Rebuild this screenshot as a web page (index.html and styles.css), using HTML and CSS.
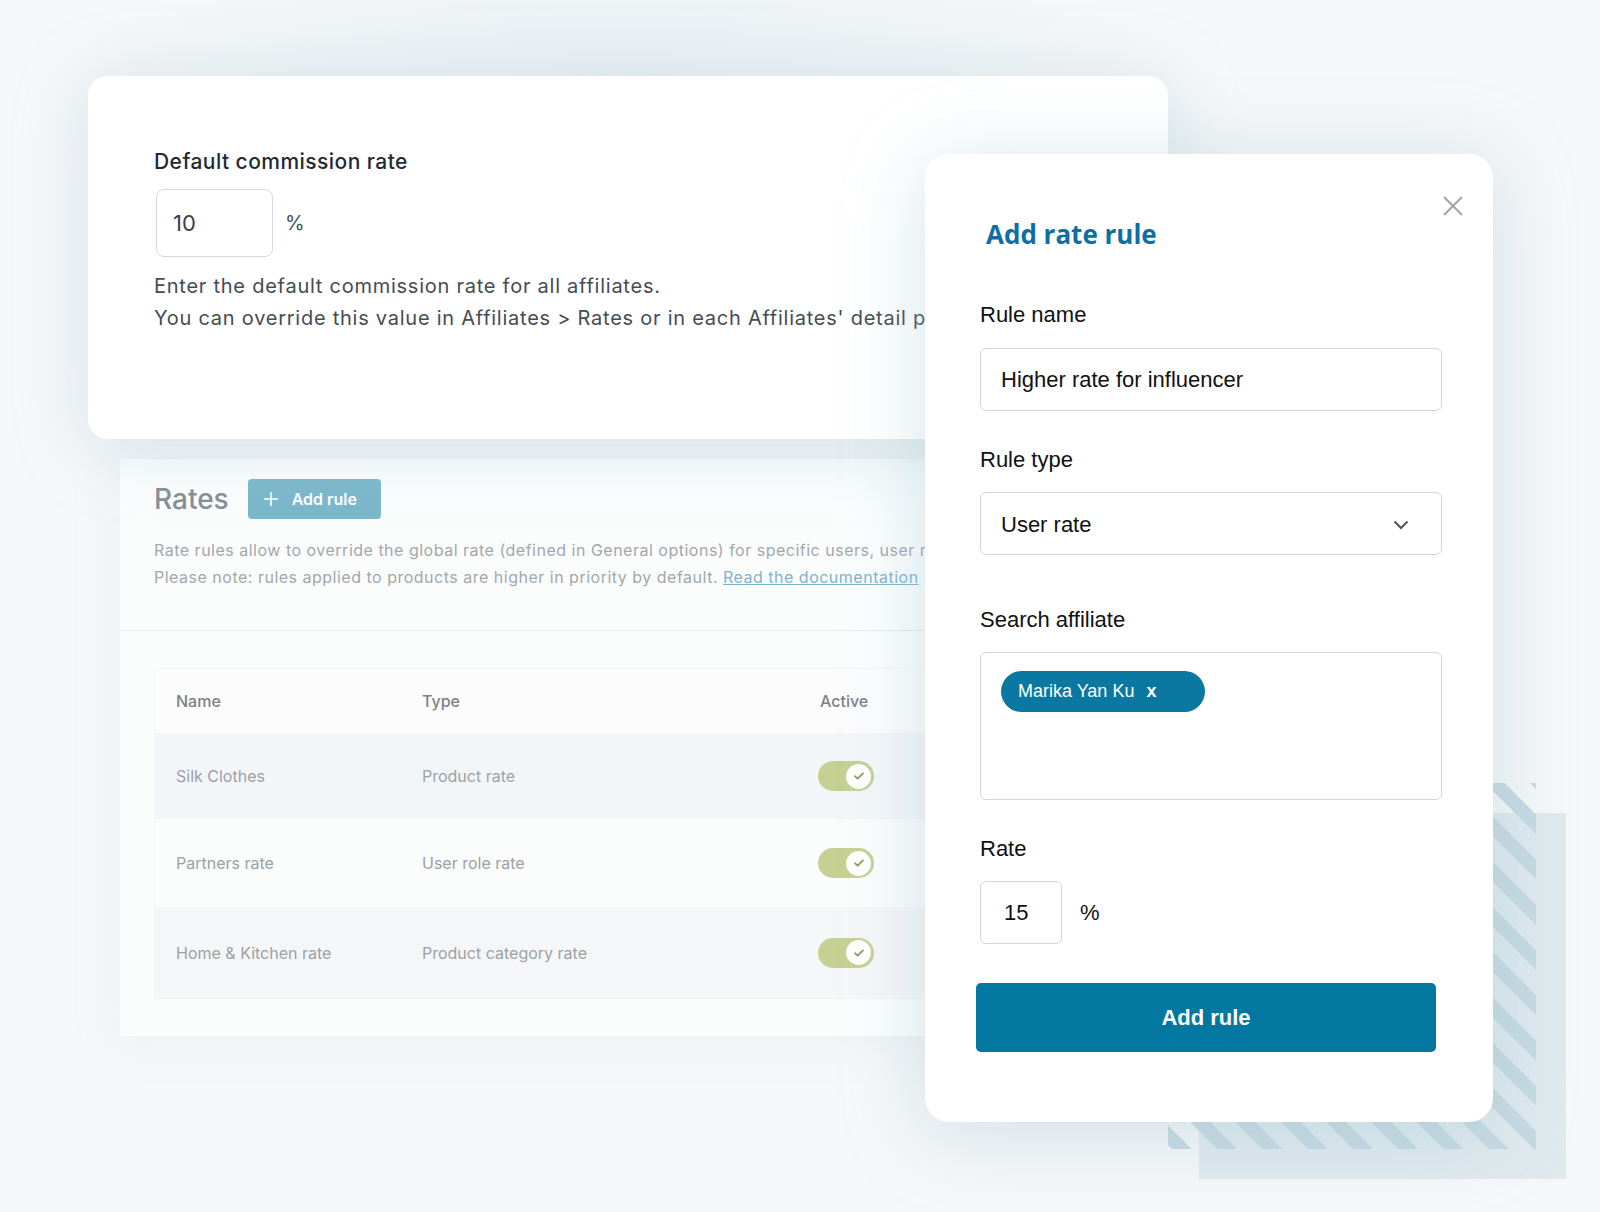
FILE: index.html
```html
<!DOCTYPE html>
<html lang="en">
<head>
<meta charset="utf-8">
<title>Rates</title>
<link rel="stylesheet" href="styles.css">
</head>
<body>
<div class="stage">
  <section class="card-default">
    <div class="dc-label">Default commission rate</div>
    <div class="dc-row">
      <div class="dc-input">10</div>
      <span class="dc-unit">%</span>
    </div>
    <p class="dc-help">Enter the default commission rate for all affiliates.<br>You can override this value in Affiliates &gt; Rates or in each Affiliates' detail page.</p>
  </section>

  <section class="rates">
    <div class="rates-head">
      <div class="rates-title-row">
        <h2 class="rates-title">Rates</h2>
        <span class="btn-small"><svg class="plus" width="14" height="14" viewBox="0 0 14 14"><path d="M7 0v14M0 7h14" stroke="#fff" stroke-width="1.6" fill="none"/></svg>Add rule</span>
      </div>
      <p class="rates-desc">Rate rules allow to override the global rate (defined in General options) for specific users, user roles, products or product categories.<br>Please note: rules applied to products are higher in priority by default. <a class="doc-link">Read the documentation</a></p>
    </div>
    <div class="table-wrap">
      <div class="table">
        <div class="tr th"><span class="c1">Name</span><span class="c2">Type</span><span class="c3">Active</span></div>
        <div class="tr r1"><span class="c1">Silk Clothes</span><span class="c2">Product rate</span><span class="c3"><span class="toggle"><span class="knob"><svg width="12" height="10" viewBox="0 0 12 10"><path d="M2 5.2l2.6 2.4L10 2.4" stroke="#8f9866" stroke-width="1.8" fill="none" stroke-linecap="round" stroke-linejoin="round"/></svg></span></span></span></div>
        <div class="tr r2"><span class="c1">Partners rate</span><span class="c2">User role rate</span><span class="c3"><span class="toggle"><span class="knob"><svg width="12" height="10" viewBox="0 0 12 10"><path d="M2 5.2l2.6 2.4L10 2.4" stroke="#8f9866" stroke-width="1.8" fill="none" stroke-linecap="round" stroke-linejoin="round"/></svg></span></span></span></div>
        <div class="tr r3"><span class="c1">Home &amp; Kitchen rate</span><span class="c2">Product category rate</span><span class="c3"><span class="toggle"><span class="knob"><svg width="12" height="10" viewBox="0 0 12 10"><path d="M2 5.2l2.6 2.4L10 2.4" stroke="#8f9866" stroke-width="1.8" fill="none" stroke-linecap="round" stroke-linejoin="round"/></svg></span></span></span></div>
      </div>
    </div>
  </section>

  <div class="deco-block"></div>
  <svg class="deco-stripes" width="368" height="366" viewBox="0 0 368 366">
    <defs>
      <pattern id="st" width="32" height="32" patternUnits="userSpaceOnUse" patternTransform="rotate(-45)">
        <rect x="0" y="0" width="14" height="32" fill="#c6d9e1"/>
      </pattern>
    </defs>
    <rect x="0" y="0" width="368" height="366" fill="url(#st)"/>
  </svg>

  <aside class="modal">
    <svg class="close" width="22" height="22" viewBox="0 0 22 22"><path d="M2 2l18 18M20 2L2 20" stroke="#a3a3a3" stroke-width="2" fill="none"/></svg>
    <h1 class="m-title">Add rate rule</h1>
    <label class="m-label first">Rule name</label>
    <div class="m-field">Higher rate for influencer</div>
    <label class="m-label">Rule type</label>
    <div class="m-field select">User rate<svg class="chev" width="16" height="10" viewBox="0 0 16 10"><path d="M1.5 1.5l6.5 6.5 6.5-6.5" stroke="#555" stroke-width="2" fill="none"/></svg></div>
    <label class="m-label gap-lg">Search affiliate</label>
    <div class="m-field area"><span class="chip">Marika Yan Ku<span class="chip-x">x</span></span></div>
    <label class="m-label">Rate</label>
    <div class="rate-row"><div class="m-field rate">15</div><span class="m-unit">%</span></div>
    <div class="m-btn">Add rule</div>
  </aside>
</div>
</body>
</html>
```

FILE: styles.css
```css
* { box-sizing: border-box; }
html, body { margin: 0; padding: 0; }
body {
  background: #f6f7f8;
  font-family: Inter, "Noto Sans", sans-serif;
}
.stage {
  position: relative;
  width: 1600px;
  height: 1212px;
  overflow: hidden;
  padding-top: 76px;
  background:
    radial-gradient(ellipse 760px 280px at 620px 110px, rgba(214,230,236,0.5), rgba(214,230,236,0) 75%),
    #f6f7f8;
}

/* default commission card */
.card-default {
  margin-left: 88px;
  width: 1080px;
  height: 363px;
  background: #fff;
  border-radius: 20px;
  padding: 74px 66px 0 66px;
  box-shadow: 0 8px 70px rgba(160,196,210,0.38);
  position: relative;
  z-index: 2;
}
.dc-label {
  font-size: 21px;
  line-height: 24px;
  font-weight: 500;
  letter-spacing: 0.45px;
  color: #1f2a33;
}
.dc-row {
  display: flex;
  align-items: center;
  margin-top: 15px;
  margin-left: 2px;
}
.dc-input {
  width: 117px;
  height: 68px;
  border: 1.5px solid #d3d9de;
  border-radius: 8px;
  font-size: 22px;
  color: #3a4148;
  display: flex;
  align-items: center;
  padding-left: 16px;
}
.dc-unit {
  margin-left: 12px;
  font-size: 20px;
  color: #4a5157;
}
.dc-help {
  margin: 13px 0 0 0;
  font-size: 20px;
  line-height: 32px;
  color: #454c52;
  letter-spacing: 0.75px;
  white-space: nowrap;
}

/* rates panel */
.rates {
  margin-left: 120px;
  margin-top: 20px;
  width: 1048px;
  height: 577px;
  background: rgba(252,253,253,0.9);
  box-shadow: 0 0 40px rgba(235,239,241,0.8);
  position: relative;
  z-index: 1;
}
.rates-head {
  padding: 20px 34px 39px 34px;
  border-bottom: 1px solid #e7eaec;
}
.rates-title-row {
  display: flex;
  align-items: center;
  height: 40px;
}
.rates-title {
  margin: 0;
  font-size: 28px;
  font-weight: 500;
  color: #878e94;
}
.btn-small {
  margin-left: 19px;
  width: 133px;
  height: 40px;
  border-radius: 4px;
  background: #7bb8cb;
  color: #fff;
  font-size: 16px;
  font-weight: 600;
  display: flex;
  align-items: center;
  padding-left: 16px;
}
.plus { margin-right: 14px; }
.rates-desc {
  margin: 18px 0 0 0;
  font-size: 16px;
  line-height: 27px;
  color: #a2a7ac;
  letter-spacing: 0.5px;
  white-space: nowrap;
}
.doc-link {
  color: #7eb2cd;
  text-decoration: underline;
}
.table-wrap {
  padding: 38px 0 0 35px;
}
.table {
  width: 1000px;
  background: #fcfcfd;
  box-shadow: 0 0 0 1px #f4f5f6;
}
.tr {
  display: flex;
  align-items: center;
  font-size: 16px;
  color: #9ca1a6;
}
.tr .c1 { width: 267px; padding-left: 21px; }
.tr .c2 { width: 398px; }
.tr .c3 { width: 200px; display: flex; align-items: center; }
.th { height: 64px; color: #7c8187; font-weight: 500; }
.r1 { height: 86px; background: #f3f6f8; }
.r2 { height: 88px; background: #fbfcfc; }
.r3 { height: 91px; background: #f5f6f7; }
.toggle {
  margin-left: -2px;
  width: 56px;
  height: 30px;
  border-radius: 15px;
  background: #c6d093;
  display: flex;
  align-items: center;
  justify-content: flex-end;
  padding-right: 3px;
}
.knob {
  width: 25px;
  height: 25px;
  border-radius: 50%;
  background: #fff;
  display: flex;
  align-items: center;
  justify-content: center;
}

/* decoration */
.deco-block {
  position: absolute;
  left: 1199px;
  top: 813px;
  width: 367px;
  height: 366px;
  background: #dfe9ee;
  z-index: 3;
}
.deco-stripes {
  position: absolute;
  left: 1168px;
  top: 783px;
  z-index: 4;
}

/* modal */
.modal {
  position: absolute;
  left: 925px;
  top: 154px;
  width: 568px;
  height: 968px;
  background: #fff;
  border-radius: 24px;
  box-shadow: 0 10px 80px rgba(150,190,205,0.4);
  z-index: 5;
  padding: 62px 50px 0 55px;
  font-family: "Liberation Sans", Arial, sans-serif;
}
.close {
  position: absolute;
  left: 517px;
  top: 41px;
}
.m-title {
  margin: 0 0 0 6px;
  font-family: "Open Sans", sans-serif;
  font-size: 26px;
  line-height: 36px;
  font-weight: 700;
  color: #0f6ea4;
}
.m-label {
  display: block;
  font-size: 22px;
  line-height: 26px;
  color: #111;
  margin-top: 36px;
  margin-bottom: 19px;
}
.m-label.first { margin-top: 50px; margin-bottom: 20px; }
.m-label.gap-lg { margin-top: 52px; }
.m-field {
  width: 462px;
  height: 63px;
  border: 1.5px solid #d6d6d6;
  border-radius: 6px;
  font-size: 22px;
  color: #111;
  display: flex;
  align-items: center;
  padding-left: 20px;
}
.m-field.select {
  justify-content: space-between;
  padding-right: 32px;
  padding-top: 3px;
}
.m-field.area {
  height: 148px;
  align-items: flex-start;
  padding-top: 18px;
}
.chip {
  width: 204px;
  height: 41px;
  border-radius: 21px;
  background: #0a78a0;
  color: #fff;
  font-size: 18px;
  display: flex;
  align-items: center;
  padding-left: 17px;
}
.chip-x {
  margin-left: 12px;
  font-weight: 700;
  font-size: 18px;
}
.rate-row {
  display: flex;
  align-items: center;
}
.m-field.rate {
  width: 82px;
  padding-left: 23px;
}
.m-unit {
  margin-left: 18px;
  font-size: 22px;
  color: #111;
}
.m-btn {
  margin-top: 39px;
  margin-left: -4px;
  width: 460px;
  height: 69px;
  border-radius: 5px;
  background: #02779f;
  color: #fff;
  font-size: 22px;
  font-weight: 700;
  display: flex;
  align-items: center;
  justify-content: center;
}
```
